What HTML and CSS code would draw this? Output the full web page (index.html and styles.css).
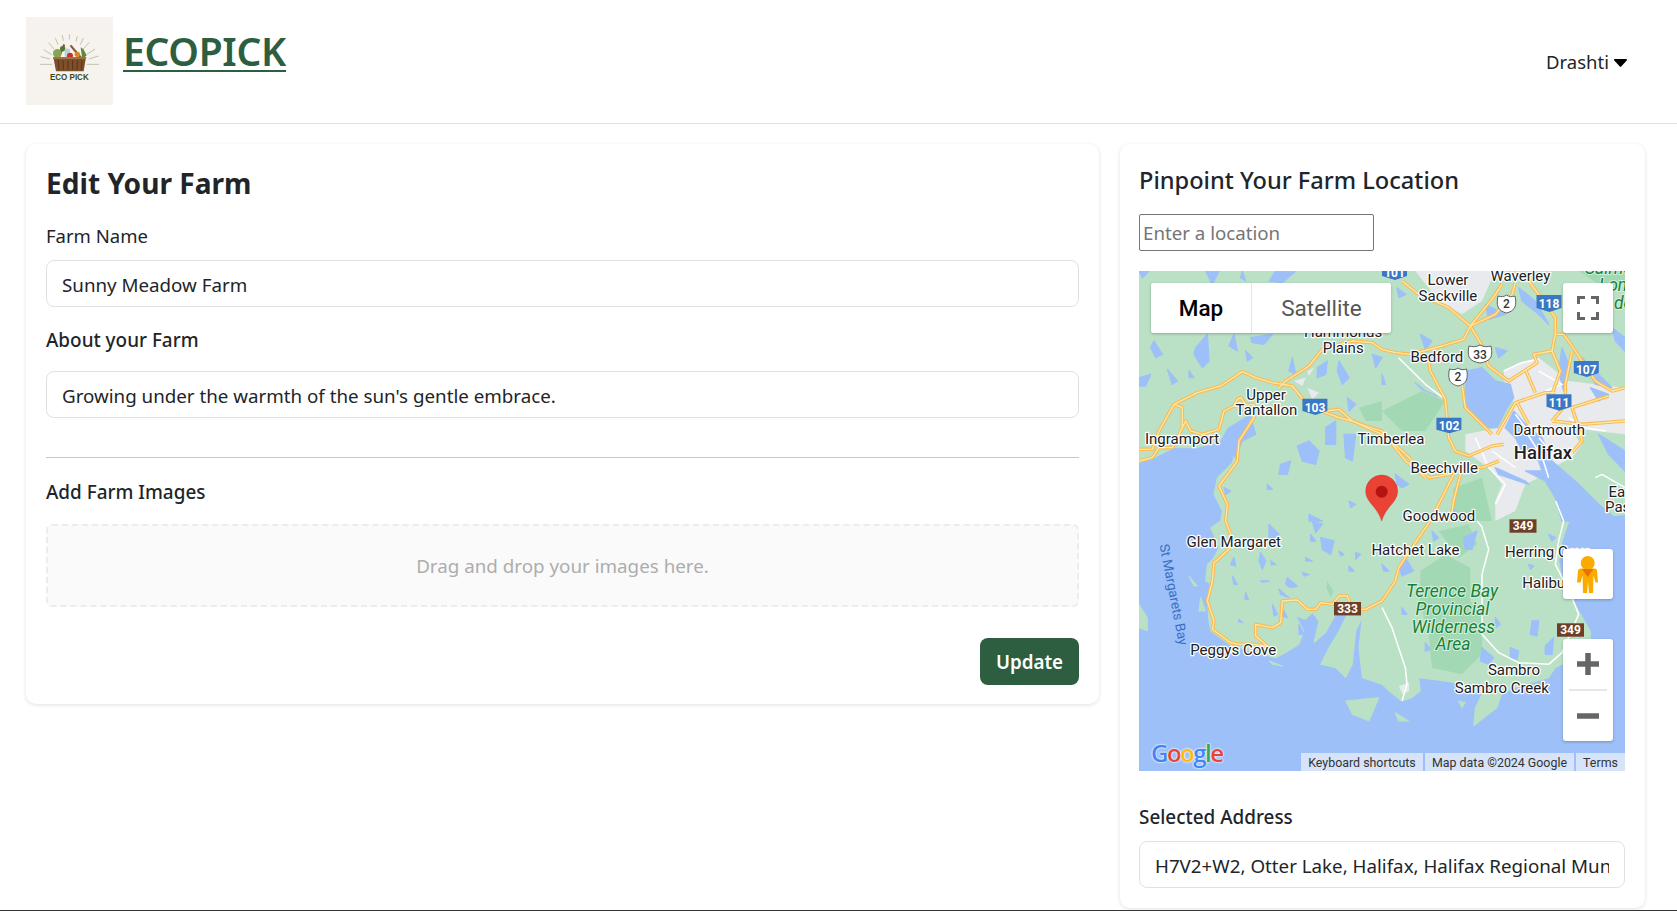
FILE: index.html
```html
<!DOCTYPE html>
<html lang="en">
<head>
<meta charset="utf-8">
<title>Ecopick - Edit Your Farm</title>
<link rel="stylesheet" href="styles.css">
</head>
<body>
<div class="page">
  <header class="topbar">
    <div class="brand">
      <svg class="logo" viewBox="78 51 261 264" aria-label="Eco Pick logo">
        <rect x="78" y="51" width="261" height="264" fill="#f6f3ee"/>
        <g class="rays">
          <path d="M120 193h36M260 193h37M122 170l28 7M296 168l-30 9M131 149l24 15M285 147l-24 16M146 128l16 19M268 127l-18 20M166 114l8 20M250 114l-9 20M187 105l3 17M232 108l-4 17M208 103v15"/>
        </g>
        <path d="M172 172l18-40 6 3-16 37zM246 172l-32-38-5 4 28 34z" fill="#8a5a30"/>
        <circle cx="172" cy="160" r="13" fill="#8aa552"/>
        <circle cx="188" cy="146" r="8" fill="#4f7a2e"/>
        <rect x="194" y="146" width="16" height="26" rx="3" fill="#b4d3dd"/>
        <circle cx="210" cy="167" r="9" fill="#c9302a"/>
        <circle cx="232" cy="163" r="8" fill="#d9861e"/>
        <path d="M246 172l-4-30 8 6 10 18-6 6z" fill="#5f8a35"/>
        <path d="M160 172h98l-7 42h-83z" fill="#7d4f2a"/>
        <path d="M159 171h100l-1 6H160z" fill="#a3703f"/>
        <path class="slats" d="M175 181l2 29M189 181l1 29M204 181v29M218 181v29M232 181l-1 29M246 181l-2 29"/>
        <text class="logo-text" x="150" y="240" textLength="116" lengthAdjust="spacingAndGlyphs">ECO PICK</text>
      </svg>
      <a class="brand-name" href="#">ECOPICK</a>
    </div>
    <div class="user">
      <span>Drashti</span>
      <svg class="caret" viewBox="0 0 13 8"><path d="M1 0h11c.9 0 1.300 1 .7 1.600L7.200 7.500c-.4.4-1 .4-1.400 0L.3 1.600C-.3 1 .1 0 1 0z"/></svg>
    </div>
  </header>

  <main class="content">
    <section class="card farm-card">
      <h1 class="farm-title">Edit Your Farm</h1>
      <label class="field-label">Farm Name</label>
      <input class="text-input" type="text" value="Sunny Meadow Farm">
      <label class="field-label strong about-label">About your Farm</label>
      <input class="text-input" type="text" value="Growing under the warmth of the sun's gentle embrace.">
      <hr class="divider">
      <label class="field-label strong">Add Farm Images</label>
      <div class="dropzone">Drag and drop your images here.</div>
      <div class="actions"><button class="update-btn" type="button">Update</button></div>
    </section>

    <section class="card location-card">
      <h2 class="location-title">Pinpoint Your Farm Location</h2>
      <input class="search-input" type="text" placeholder="Enter a location">
      <div class="map">
        <svg class="map-canvas" viewBox="0 0 486 500" width="486" height="500">
          <defs>
            <g id="highways">
              <path d="M0 535L40 535 60 480 105 400 175 365 245 345 310 302 350 320 400 335 460 345 500 395 560 425 600 440 640 450 729 490 790 540 870 620 930 610 975 580 1030 590 1080 570"/>
              <path d="M560 420L600 415 640 450 680 465 729 480 800 570 860 620"/>
              <path d="M0 570L40 560 60 530 100 530 130 470 130 410 105 400M130 470L140 450 155 480 190 490 240 475 255 420 285 405 345 400M285 405L295 385 305 380 320 400M345 400L345 440 300 510 295 570 270 605 240 645 265 700 260 750"/>
              <path d="M420 350L440 330 510 285 550 235 640 210 700 215 729 235 769 245 814 250 909 225 974 205 994 165 1059 85 1089 40"/>
              <path d="M260 750L275 790 270 835 225 875 220 930 205 990 225 1050 220 1075 275 1115 300 1120 340 1120 385 1125 350 1095 350 1060 400 1070 425 1055 430 990 475 987 505 1015 530 1015 545 995 580 1000 600 975 625 975 640 1015 680 1015 729 990 769 930 779 890 839 800 874 750 944 610"/>
              <path d="M789 30L839 70 929 110 994 165 1024 215 1049 285 1109 330 1194 275 1184 250 1239 240 1249 190 1249 140 1199 70 1169 30M994 165L1069 130 1119 70 1129 35"/>
              <path d="M869 270L874 300 919 385 929 500 949 540 989 555 1059 525 1094 520M1059 490L979 410 969 340M1239 240L1264 300 1239 370M1249 190L1274 190 1309 240 1369 330 1419 360 1458 350"/>
              <path d="M1074 490L1129 395 1219 365 1249 365M1159 295L1189 365M1299 410L1409 375M1299 240L1279 340 1279 410M1134 395L1169 460M1299 410L1319 470 1329 510 1299 545M1239 450L1269 415M1239 450L1329 460 1458 450M964 610L944 690 934 750"/>
            </g>
          </defs>
          <g transform="scale(.33333)">
            <path class="land" d="M0 0H1458V730L1300 750 1290 750 1269 810 1259 870 1274 940 1299 980 1319 1020 1354 1080 1354 1105 1309 1160 1249 1190 1229 1220 1159 1240 1089 1265 1074 1310 1004 1365 1009 1310 1029 1270 969 1240 919 1230 839 1220 844 1260 819 1280 789 1290 749 1260 729 1240 670 1220 660 1130 670 1040 650 1080 640 1180 620 1220 590 1190 545 1180 570 1130 600 1080 630 1020 590 1030 560 1085 525 1115 540 1050 520 1025 500 1045 470 1035 495 1080 480 1120 440 1145 410 1160 350 1145 270 1120 215 1080 210 1050 205 990 220 940 200 930 205 880 225 860 240 830 215 770 245 750 250 720 225 670 235 620 280 575 300 500 340 440 330 430 265 470 240 515 170 530 105 530 45 560 0 575Z"/>
            <path class="land" d="M150 915L175 945 165 945ZM185 980L200 1020 180 1020ZM0 1000L25 1040 25 1080 0 1070ZM620 1290L720 1280 690 1350 640 1330ZM390 1170L430 1185 400 1180ZM959 1290L979 1295 969 1310ZM769 1325L809 1350 779 1350Z"/>
            <path class="forest" d="M844 900L919 850 994 890 994 990 1029 1040 1029 1150 969 1210 879 1190 869 1090 844 1000ZM899 780L989 760 1014 820 959 860ZM729 420L849 360 919 390 859 480 789 480ZM660 410L729 390 729 450 680 450ZM944 650L1029 620 1059 750 939 750ZM1319 0H1458V40L1379 40Z"/>
            <path class="forest" d="M1304 930L1314 960 1299 980 1294 950ZM565 930L583 960 575 980 562 950Z"/>
            <path class="urban" d="M829 0H1069L1029 90 969 130 899 90ZM1094 300L1139 275 1199 260 1289 330 1458 350V490L1369 480 1289 470 1329 520 1299 560 1239 590 1199 620 1159 640 1129 720 1069 750 1069 690 1089 640 1049 590 979 540 979 490 1079 470 1129 400 1099 360ZM465 330L500 320 490 345ZM505 350L540 365 520 385ZM505 300L525 290 510 315ZM780 1245L810 1235 810 1260 790 1270Z"/>
            <g class="water">
              <path d="M984 300L1029 290 1069 330 1114 340 1124 380 1099 420 1074 470 1049 470 999 420 974 410 979 350Z"/>
              <path d="M1099 470L1124 420 1169 470 1209 500 1239 570 1319 640 1379 700 1440 750 1300 750 1269 750 1249 680 1219 630 1159 600 1209 600 1199 570 1149 540 1129 500Z"/>
              <path d="M1069 590L1159 630 1169 640 1079 610ZM1139 50L1189 90 1229 160 1199 130 1149 90ZM1269 230L1294 290 1274 360 1259 300ZM1329 260L1369 300 1419 350 1369 340ZM1354 350L1409 370 1379 390ZM1419 170L1458 200V240L1429 210ZM1379 490L1458 540V600L1409 550ZM844 190L879 210 859 235ZM1069 230L1104 240 1079 260ZM1039 100L1099 130 1049 145ZM769 610L809 640 789 650 774 640ZM829 335L859 360 894 375 849 355ZM729 310L739 340 729 340ZM939 710L959 730 939 740ZM774 50L800 70 780 80Z"/>
              <path d="M200 0H240L220 40ZM410 0H470L430 35 390 30ZM310 0L320 30 305 20ZM0 0H30L10 20ZM285 190L295 240 270 225ZM335 200L400 190 375 220 340 215ZM170 230L205 190 210 270 190 290 165 250ZM45 210L70 250 50 260 35 230ZM0 320L35 310 20 345 0 345ZM85 295L115 330 100 340ZM150 300L165 320 150 320ZM320 240L340 260 325 270ZM460 260L470 310 450 300ZM535 290L565 270 560 310 535 320ZM600 270L630 320 610 340 595 300ZM625 380L650 400 630 420ZM700 250L729 260 710 290ZM475 525L510 510 540 540 530 580 490 570ZM425 580L455 570 445 610 420 610ZM560 470L590 450 590 520 560 520ZM615 490L650 490 640 570 620 560ZM255 650L275 660 260 670ZM385 640L400 655 385 655ZM630 690L650 700 635 710ZM510 730L550 750 510 750ZM340 455L350 490 310 510 290 560 270 520 300 470Z"/>
              <path d="M390 760L420 790 410 820 390 800ZM520 750L550 760 530 785ZM545 800L585 810 575 850 550 835ZM515 790L530 810 515 810ZM365 845L380 870 370 895 360 870ZM285 860L290 885 275 880ZM395 870L410 880 398 882ZM500 860L520 870 500 870ZM600 840L615 850 605 855ZM650 845L665 850 650 865ZM630 885L645 900 630 900ZM490 905L510 910 495 915ZM445 920L475 945 455 950 440 940ZM280 915L295 940 285 940ZM365 930L390 930 370 933ZM320 965L328 985 318 985ZM420 955L450 980 425 970ZM400 1000L415 1030 405 1035ZM300 1045L310 1055 298 1052ZM435 1020L445 1040 430 1035ZM480 1060L495 1090 480 1090Z"/>
              <path d="M879 780L899 800 884 810ZM974 800L1014 780 999 835 979 835ZM799 860L824 900 789 915 779 885ZM729 880L749 900 734 900ZM789 1010L804 1030 789 1030ZM859 1115L874 1135 859 1140ZM1179 1050L1199 1050 1194 1095 1174 1090ZM1114 1130L1139 1140 1134 1165 1114 1160ZM1219 1125L1244 1100 1239 1150 1219 1150ZM1029 1130L1064 1160 1049 1180 1024 1170ZM1069 1040L1084 1060 1069 1070ZM1229 790L1249 800 1239 810ZM1169 880L1184 885 1174 895Z"/>
            </g>
            <g class="minor-road">
              <path d="M1029 770L1049 835 1029 910 1029 1090 1079 1145 1139 1175 1229 1180 1269 1145 1319 1030 1299 980 1249 880 1259 810 1274 750 1250 690M729 1010L759 1070 799 1190 804 1240 789 1290M779 260L859 340 919 385M1369 620L1389 610 1458 650M1015 750L1030 770"/>
            </g>
            <g class="city-road">
              <path d="M1094 300L1149 275 1199 265M1199 300L1269 340 1219 360M1160 480L1210 560 1229 620M1009 500L1049 590 1099 640 1069 700M1289 440L1339 470 1400 480M1060 540L1129 590M1200 500L1250 560M1129 430L1160 470"/>
            </g>
            <use href="#highways" class="road-case"/>
            <use href="#highways" class="road-fill"/>
            <path class="pin" d="M728 750C715 705 680 695 680 660A48 48 0 0 1 776 660C776 695 741 705 728 750Z"/>
            <circle class="pin-dot" cx="728" cy="662" r="18"/>
          </g>

          <g class="shield-blue">
            <path d="M243-4h25v9l-12 4-13-4z"/>
            <path d="M397.500 24h25v13l-12 4-13-4zM434.800 90h25v12l-12 4-13-4zM407.500 123.300h25v12.400l-12 4-13-4zM163.400 127.700h25v12.300l-12 4-13-4zM297.400 146.700h25v12l-12 3.600-13-3.600z"/>
          </g>
          <text class="shield-label" x="255.500" y="6">101</text>
          <text class="shield-label" x="410" y="37">118</text>
          <text class="shield-label" x="447.300" y="103">107</text>
          <text class="shield-label" x="420" y="136">111</text>
          <text class="shield-label" x="176" y="141">103</text>
          <text class="shield-label" x="310" y="159">102</text>
          <rect class="shield-brown" x="370.500" y="248.300" width="27" height="13.400"/>
          <rect class="shield-brown" x="418" y="352.300" width="27" height="13.400"/>
          <rect class="shield-brown" x="195" y="331" width="27" height="13.400"/>
          <text class="shield-label" x="384" y="259">349</text>
          <text class="shield-label" x="431.500" y="363">349</text>
          <text class="shield-label" x="208.500" y="342">333</text>
          <path class="shield-white" d="M359 25c3 1 6 1 8.500-1 2.500 2 5.500 2 8.500 1 1 4 1 8 0 11-2 4-5 5-8.500 6-3.500-1-6.500-2-8.500-6-1-3-1-7 0-11z"/>
          <path class="shield-white" d="M330 75c4 1 7 1 11-1 4 2 7 2 11 1 1 4 1 8 0 11-2 4-6 5-11 6-5-1-9-2-11-6-1-3-1-7 0-11z"/>
          <path class="shield-white" d="M310.500 98c3 1 6 1 8.500-1 2.500 2 5.500 2 8.500 1 1 4 1 8 0 11-2 4-5 5-8.500 6-3.500-1-6.500-2-8.500-6-1-3-1-7 0-11z"/>
          <text class="shield-dark" x="367.500" y="37">2</text>
          <text class="shield-dark" x="341" y="88">33</text>
          <text class="shield-dark" x="319" y="110">2</text>

          <text class="place" x="288.500" y="14.300">Lower</text>
          <text class="place" x="279.600" y="29.700">Sackville</text>
          <text class="place" x="351.400" y="10.300">Waverley</text>
          <text class="place" x="165" y="65.700">Hammonds</text>
          <text class="place" x="183.700" y="81.700">Plains</text>
          <text class="place" x="271.400" y="90.700">Bedford</text>
          <text class="place" x="107.300" y="129">Upper</text>
          <text class="place" x="96.600" y="143.700">Tantallon</text>
          <text class="place" x="218.500" y="173">Timberlea</text>
          <text class="place" x="6" y="173">Ingramport</text>
          <text class="place" x="374.500" y="164">Dartmouth</text>
          <text class="place city" x="374.800" y="188.300">Halifax</text>
          <text class="place" x="271.400" y="202.300">Beechville</text>
          <text class="place" x="263.600" y="250">Goodwood</text>
          <text class="place" x="469.600" y="225.700">Eastern</text>
          <text class="place" x="466" y="240.700">Passage</text>
          <text class="place" x="47.600" y="275.700">Glen Margaret</text>
          <text class="place" x="232.400" y="284">Hatchet Lake</text>
          <text class="place" x="366" y="286.300">Herring Cove</text>
          <text class="place" x="383.300" y="317.300">Halibut Bay</text>
          <text class="place" x="51.200" y="384">Peggys Cove</text>
          <text class="place" x="348.900" y="404">Sambro</text>
          <text class="place" x="315.800" y="422.300">Sambro Creek</text>
          <text class="park" x="267" y="326.300">Terence Bay</text>
          <text class="park" x="276.500" y="344">Provincial</text>
          <text class="park" x="272.500" y="361.700">Wilderness</text>
          <text class="park" x="296.600" y="379">Area</text>
          <text class="park" x="446" y="3">Salmon</text>
          <text class="park" x="460" y="20">Lon</text>
          <text class="park" x="475" y="38">de</text>
          <text class="bay" transform="translate(20.500,274) rotate(79)">St Margarets Bay</text>
        </svg>

        <div class="map-type">
          <button class="map-type-btn active" type="button">Map</button>
          <button class="map-type-btn" type="button">Satellite</button>
        </div>
        <button class="map-ctrl fullscreen" type="button" aria-label="Fullscreen">
          <svg viewBox="0 0 50 50"><path d="M15.500 21v-6.500H22M28 14.500h6.500V21M34.500 29v6.500H28M22 35.500h-6.500V29"/></svg>
        </button>
        <button class="map-ctrl pegman" type="button" aria-label="Street View">
          <svg viewBox="0 0 50 50">
            <circle cx="24.700" cy="14" r="7" fill="#f9ab00"/>
            <path d="M18 19.500h13.500c1.500 0 2.200.8 2.500 2l1 12h-2.500l-2-7-.5 17.500h-4l-1-11-1 11h-4l-.5-17.500-2 7H14l1-12c.3-1.200 1.500-2 3-2z" fill="#f9ab00"/>
            <path d="M19 20l5.700 8 5.700-8z" fill="#e8710a"/>
          </svg>
        </button>
        <div class="map-ctrl zoom">
          <button class="zoom-btn" type="button" aria-label="Zoom in"><svg viewBox="0 0 50 50"><path d="M14 25h22M25 14v22"/></svg></button>
          <span class="zoom-sep"></span>
          <button class="zoom-btn" type="button" aria-label="Zoom out"><svg viewBox="0 0 50 50"><path d="M14 25h22"/></svg></button>
        </div>
        <div class="google"><span class="g-b">G</span><span class="g-r">o</span><span class="g-y">o</span><span class="g-b">g</span><span class="g-g">l</span><span class="g-r">e</span></div>
        <div class="attribution">
          <span class="attr attr-keys">Keyboard shortcuts</span>
          <span class="attr attr-data">Map data ©2024 Google</span>
          <span class="attr attr-terms">Terms</span>
        </div>
      </div>
      <label class="field-label strong address-label">Selected Address</label>
      <input class="text-input" type="text" value="H7V2+W2, Otter Lake, Halifax, Halifax Regional Municipality, NS, Canada">
    </section>
  </main>
</div>
</body>
</html>
```
FILE: styles.css
```css
* { box-sizing: border-box; }
html, body { margin: 0; padding: 0; background: #fff; }
body { font-family: "Noto Sans", "Open Sans", sans-serif; color: #212529; }
.page { height: 911px; border-bottom: 1px solid #343434; overflow: hidden; }

.topbar { height: 124px; border-bottom: 1px solid #dfe1e4; display: flex; justify-content: space-between; padding: 17px 50px 0 26px; }
.brand { display: flex; align-items: flex-start; gap: 10px; }
.logo { width: 87px; height: 88px; display: block; }
.rays path { stroke: #b9b8a0; stroke-width: 2.500; fill: none; }
.slats { stroke: #4f2f16; stroke-width: 2.500; fill: none; }
.logo-text { font-family: "Liberation Sans", sans-serif; font-weight: 700; font-size: 29px; fill: #3a4a14; }
.brand-name { font-size: 39px; font-weight: 600; line-height: 50px; margin-top: 9px; color: #2e5e40; letter-spacing: -.3px; text-decoration: underline; text-decoration-thickness: 2px; text-underline-offset: 4px; }
.user { display: flex; align-items: center; gap: 5px; height: 88px; font-size: 18.500px; }
.caret { width: 13px; height: 8px; fill: #000; margin-top: 3px; }

.content { display: flex; align-items: flex-start; gap: 21px; padding: 20px 32px 0 26px; }
.card { background: #fff; border-radius: 10px; box-shadow: 0 1px 4px rgba(0, 0, 0, .12); }
.farm-card { width: 1073px; height: 560px; padding: 19px 20px 20px; }
.location-card { width: 525px; height: 764px; padding: 18px 20px 20px 19px; }

.farm-title { margin: 0 0 19px; font-size: 28.100px; line-height: 40px; font-weight: 700; }
.field-label { display: block; font-size: 18.500px; line-height: 28px; margin-bottom: 10px; }
.strong { font-weight: 500; font-size: 18.900px; }
.about-label { margin-top: 19px; margin-bottom: 17px; }
.text-input { display: block; width: 100%; height: 47px; padding: 1px 15px 0; border: 1px solid #dee2e6; border-radius: 8px; font: 18.750px "Noto Sans", sans-serif; color: #212529; background: #fff; outline: none; }
.divider { border: 0; border-top: 1px solid #c6c8ca; margin: 39px 0 20px; }
.dropzone { height: 83px; margin-top: 18px; display: flex; align-items: center; justify-content: center; background: #fafafa; border: 2px dashed #ececec; border-radius: 6px; color: #adadad; font-size: 18.800px; }
.actions { display: flex; justify-content: flex-end; margin-top: 31px; }
.update-btn { width: 99px; height: 47px; border: 0; border-radius: 8px; background: #2e5e40; color: #fff; font: 600 18.800px "Noto Sans", sans-serif; }

.location-title { margin: 0 0 16px; font-size: 23.600px; line-height: 36px; font-weight: 500; }
.search-input { display: block; width: 235px; height: 37px; padding: 0 3px; border: 1px solid #767676; border-radius: 2px; font: 18.700px "Noto Sans", sans-serif; outline: none; }
.search-input::placeholder { color: #757575; opacity: 1; }
.address-label { margin-top: 32px; margin-bottom: 10px; }

.map { position: relative; width: 486px; height: 500px; margin-top: 20px; overflow: hidden; background: #9dc0f9; }
.map-canvas { display: block; }
.land { fill: #bae1c5; stroke: #bae1c5; stroke-width: 3; stroke-linejoin: round; }
.forest { fill: #a3d8b5; }
.urban { fill: #e8eaed; }
.water path { fill: #9dc0f9; stroke: #9dc0f9; stroke-width: 4; stroke-linejoin: round; }
.minor-road path { fill: none; stroke: #fff; stroke-width: 1.500px; stroke-linejoin: round; vector-effect: non-scaling-stroke; }
.city-road path { fill: none; stroke: #fff; stroke-width: 1.500px; vector-effect: non-scaling-stroke; }
.road-case { fill: none; stroke: #f8bb55; stroke-width: 3.500px; stroke-linejoin: round; }
.road-fill { fill: none; stroke: #fee8a6; stroke-width: 1.300px; stroke-linejoin: round; }
#highways path { vector-effect: non-scaling-stroke; }
.pin { fill: #ea4335; stroke: #c5221f; stroke-width: 1; }
.pin-dot { fill: #b31412; }
.shield-blue path { fill: #3b78c4; }
.shield-brown { fill: #6e3f27; }
.shield-white { fill: #fff; stroke: #5f6368; stroke-width: 1; }
.shield-label { font: 700 12px Roboto, sans-serif; fill: #fff; text-anchor: middle; }
.shield-dark { font: 500 12px Roboto, sans-serif; fill: #333; text-anchor: middle; }
.place { font: 400 15px Roboto, sans-serif; fill: #202124; stroke: #fff; stroke-width: 2.500px; paint-order: stroke; stroke-linejoin: round; }
.city { font-size: 18.500px; font-weight: 500; }
.park { font: italic 400 17.500px Roboto, sans-serif; fill: #188038; stroke: #d5f0dc; stroke-width: 2px; paint-order: stroke; }
.bay { font: 400 13.500px Roboto, sans-serif; fill: #3a6fc6; }

.map-type { position: absolute; left: 12px; top: 12px; width: 240px; height: 50px; display: flex; background: #fff; border-radius: 3px; box-shadow: 0 1px 3px rgba(0, 0, 0, .25); overflow: hidden; }
.map-type-btn { border: 0; background: #fff; color: #565656; font: 400 22.500px Roboto, sans-serif; padding: 0; flex: 1 1 0; }
.map-type-btn.active { flex: 0 0 101px; color: #000; font-weight: 500; border-right: 1px solid #e6e6e6; }
.map-ctrl { position: absolute; left: 424px; width: 50px; background: #fff; border: 0; padding: 0; border-radius: 3px; box-shadow: 0 1px 3px rgba(0, 0, 0, .25); }
.map-ctrl svg { display: block; width: 50px; height: 50px; }
.fullscreen { top: 12px; height: 50px; }
.fullscreen path { fill: none; stroke: #666; stroke-width: 3px; }
.pegman { top: 278px; height: 50px; }
.zoom { top: 368px; height: 102px; display: flex; flex-direction: column; align-items: center; }
.zoom-btn { border: 0; background: none; padding: 0; height: 50px; width: 50px; }
.zoom-btn path { fill: none; stroke: #666; stroke-width: 5.500px; }
.zoom-sep { width: 38px; height: 2px; background: #e6e6e6; flex: none; }

.google { position: absolute; left: 12px; bottom: 4px; font: 600 24px/28px "Open Sans", sans-serif; letter-spacing: -1.500px; text-shadow: 0 0 2px #fff, 0 0 2px #fff; }
.g-b { color: #4285f4; }
.g-r { color: #ea4335; }
.g-y { color: #fbbc05; }
.g-g { color: #34a853; }

.attribution { position: absolute; right: 0; bottom: 0; height: 18px; display: flex; gap: 2px; }
.attr { display: flex; align-items: center; justify-content: center; background: #d6e3f8; color: #333; font: 400 12.400px Roboto, sans-serif; white-space: nowrap; }
.attr-keys { width: 122px; }
.attr-data { width: 149px; }
.attr-terms { width: 49px; }
```
